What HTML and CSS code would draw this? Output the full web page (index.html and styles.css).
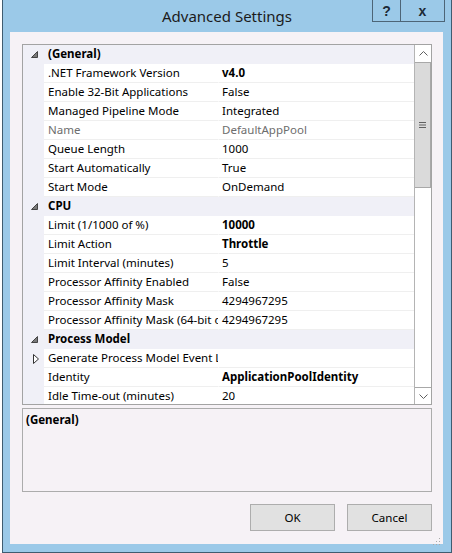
FILE: index.html
```html
<!DOCTYPE html>
<html>
<head>
<meta charset="utf-8">
<link rel="stylesheet" href="styles.css">
</head>
<body>
<div class="window">
  <div class="titlebar">
    <div class="spacer"></div>
    <div class="title">Advanced Settings</div>
    <div class="caption">
      <div class="cbtn help">?</div>
      <div class="cbtn close">x</div>
    </div>
  </div>
  <div class="client">
    <div class="grid">
      <div class="rows">
        <div class="row cat"><span class="gut"><svg width="7" height="7" viewBox="0 0 7 7"><polygon points="6.5,0.5 6.5,6.5 0.5,6.5" fill="#7a7a7a" stroke="#444" stroke-width="1"/></svg></span><span class="cname">(General)</span></div>
        <div class="row"><span class="gut"></span><span class="name">.NET Framework Version</span><span class="val b">v4.0</span></div>
        <div class="row"><span class="gut"></span><span class="name">Enable 32-Bit Applications</span><span class="val">False</span></div>
        <div class="row"><span class="gut"></span><span class="name">Managed Pipeline Mode</span><span class="val">Integrated</span></div>
        <div class="row dis"><span class="gut"></span><span class="name">Name</span><span class="val">DefaultAppPool</span></div>
        <div class="row"><span class="gut"></span><span class="name">Queue Length</span><span class="val">1000</span></div>
        <div class="row"><span class="gut"></span><span class="name">Start Automatically</span><span class="val">True</span></div>
        <div class="row"><span class="gut"></span><span class="name">Start Mode</span><span class="val">OnDemand</span></div>
        <div class="row cat"><span class="gut"><svg width="7" height="7" viewBox="0 0 7 7"><polygon points="6.5,0.5 6.5,6.5 0.5,6.5" fill="#7a7a7a" stroke="#444" stroke-width="1"/></svg></span><span class="cname">CPU</span></div>
        <div class="row"><span class="gut"></span><span class="name">Limit (1/1000 of %)</span><span class="val b">10000</span></div>
        <div class="row"><span class="gut"></span><span class="name">Limit Action</span><span class="val b">Throttle</span></div>
        <div class="row"><span class="gut"></span><span class="name">Limit Interval (minutes)</span><span class="val">5</span></div>
        <div class="row"><span class="gut"></span><span class="name">Processor Affinity Enabled</span><span class="val">False</span></div>
        <div class="row"><span class="gut"></span><span class="name">Processor Affinity Mask</span><span class="val">4294967295</span></div>
        <div class="row"><span class="gut"></span><span class="name">Processor Affinity Mask (64-bit option)</span><span class="val">4294967295</span></div>
        <div class="row cat"><span class="gut"><svg width="7" height="7" viewBox="0 0 7 7"><polygon points="6.5,0.5 6.5,6.5 0.5,6.5" fill="#7a7a7a" stroke="#444" stroke-width="1"/></svg></span><span class="cname">Process Model</span></div>
        <div class="row"><span class="gut exp"><svg width="6" height="10" viewBox="0 0 6 10"><polygon points="0.5,0.5 5.5,5 0.5,9.5" fill="#fff" stroke="#333" stroke-width="1"/></svg></span><span class="name">Generate Process Model Event Log Entry</span><span class="val"></span></div>
        <div class="row"><span class="gut"></span><span class="name">Identity</span><span class="val b">ApplicationPoolIdentity</span></div>
        <div class="row"><span class="gut"></span><span class="name">Idle Time-out (minutes)</span><span class="val">20</span></div>
      </div>
      <div class="scrollbar">
        <div class="sbtn up"><svg width="9" height="5" viewBox="0 0 9 5"><polyline points="0.5,4.5 4.5,0.5 8.5,4.5" fill="none" stroke="#606060" stroke-width="1"/></svg></div>
        <div class="thumb"><svg width="7" height="6" viewBox="0 0 7 6"><rect x="0" y="0" width="7" height="1" fill="#606060"/><rect x="0" y="2.5" width="7" height="1" fill="#606060"/><rect x="0" y="5" width="7" height="1" fill="#606060"/></svg></div>
        <div class="track"></div>
        <div class="sbtn down"><svg width="9" height="5" viewBox="0 0 9 5"><polyline points="0.5,0.5 4.5,4.5 8.5,0.5" fill="none" stroke="#606060" stroke-width="1"/></svg></div>
      </div>
    </div>
    <div class="desc"><span class="desc-title">(General)</span></div>
    <div class="buttons">
      <button class="btn">OK</button>
      <button class="btn">Cancel</button>
    </div>
    <div class="grip"><svg width="8" height="8" viewBox="0 0 8 8"><rect x="6" y="0" width="1" height="1" fill="#a8a8a8"/><rect x="3" y="3" width="1" height="1" fill="#a8a8a8"/><rect x="6" y="3" width="1" height="1" fill="#a8a8a8"/><rect x="0" y="6" width="1" height="1" fill="#a8a8a8"/><rect x="3" y="6" width="1" height="1" fill="#a8a8a8"/><rect x="6" y="6" width="1" height="1" fill="#a8a8a8"/></svg></div>
  </div>
</div>
</body>
</html>
```

FILE: styles.css
```css
html, body {
  margin: 0;
  padding: 0;
  background: #ffffff;
}
body {
  width: 452px;
  height: 553px;
  overflow: hidden;
  font-family: "Noto Sans", "Open Sans", sans-serif;
  font-size: 11.5px;
  color: #000;
}
.window {
  margin-left: 2px;
  width: 448px;
  height: 552px;
  background: #9bc9e8;
  border-left: 1px solid #3f5c70;
  border-right: 1px solid #3f5c70;
  border-bottom: 1px solid #3f5c70;
  display: flex;
  flex-direction: column;
}
.titlebar {
  height: 32px;
  display: grid;
  grid-template-columns: 1fr auto 1fr;
  align-items: start;
}
.title {
  font-size: 15px;
  line-height: 32px;
  color: #1b1b1b;
}
.caption {
  justify-self: end;
  display: flex;
  margin-right: 6px;
}
.cbtn {
  height: 21px;
  border: 1px solid #4d6577;
  border-top: none;
  font-family: "Liberation Sans", sans-serif;
  font-weight: bold;
  font-size: 14px;
  color: #1c2a36;
  display: flex;
  align-items: center;
  justify-content: center;
}
.cbtn.help {
  width: 27px;
  border-right: none;
}
.cbtn.close {
  width: 43px;
}
.client {
  position: relative;
  margin: 0 8px 8px 7px;
  flex: 1;
  background: #f6f2f6;
  padding: 12px 11px 0 12px;
  display: flex;
  flex-direction: column;
}
.grid {
  height: 361px;
  box-sizing: border-box;
  border: 1px solid #a3a3a3;
  background: #fff;
  display: flex;
  overflow: hidden;
}
.rows {
  width: 391px;
  display: flex;
  flex-direction: column;
}
.row {
  height: 19px;
  flex: none;
  display: flex;
  line-height: 18px;
  white-space: nowrap;
}
.gut {
  width: 21px;
  flex: none;
  background: #f0f0f7;
  display: flex;
  align-items: center;
  justify-content: flex-start;
  padding-left: 8px;
  box-sizing: border-box;
}
.gut.exp {
  padding-left: 10px;
}
.name {
  width: 175px;
  flex: none;
  box-sizing: border-box;
  padding-left: 4px;
  overflow: hidden;
  border-bottom: 1px solid #efefef;
  border-right: 1px solid #fff;
}
.val {
  flex: 1;
  padding-left: 3px;
  overflow: hidden;
  border-bottom: 1px solid #efefef;
}
.b {
  font-weight: bold;
}
.row.dis .name, .row.dis .val {
  color: #6d6d6d;
}
.row.cat {
  background: #f0f0f7;
}
.cname {
  font-weight: bold;
  padding-left: 4px;
}
.scrollbar {
  width: 17px;
  flex: none;
  box-sizing: border-box;
  border-left: 1px solid #b4b4b4;
  display: flex;
  flex-direction: column;
  background: #fff;
}
.sbtn {
  height: 17px;
  flex: none;
  display: flex;
  align-items: center;
  justify-content: center;
  background: #fff;
}
.sbtn.up {
  border-bottom: 1px solid #a8a8a8;
}
.sbtn.down {
  border-top: 1px solid #a8a8a8;
  height: 16px;
}
.thumb {
  height: 125px;
  flex: none;
  box-sizing: border-box;
  background: #dadada;
  border-right: 1px solid #a8a8a8;
  border-bottom: 1px solid #a8a8a8;
  display: flex;
  align-items: center;
  justify-content: center;
}
.track {
  flex: 1;
  background: #fff;
}
.desc {
  margin-top: 3px;
  height: 84px;
  box-sizing: border-box;
  border: 1px solid #acacac;
  padding: 3px 0 0 3px;
}
.desc-title {
  font-weight: bold;
}
.buttons {
  margin-top: 12px;
  display: flex;
  justify-content: flex-end;
  gap: 12px;
}
.btn {
  width: 85px;
  height: 27px;
  box-sizing: border-box;
  border: 1px solid #adadad;
  background: #e1e1e1;
  font-family: "Noto Sans", "Open Sans", sans-serif;
  font-size: 11.5px;
  color: #000;
  padding: 0;
  margin: 0;
}
.grip {
  position: absolute;
  right: 2px;
  bottom: 2px;
  width: 8px;
  height: 8px;
}
```
